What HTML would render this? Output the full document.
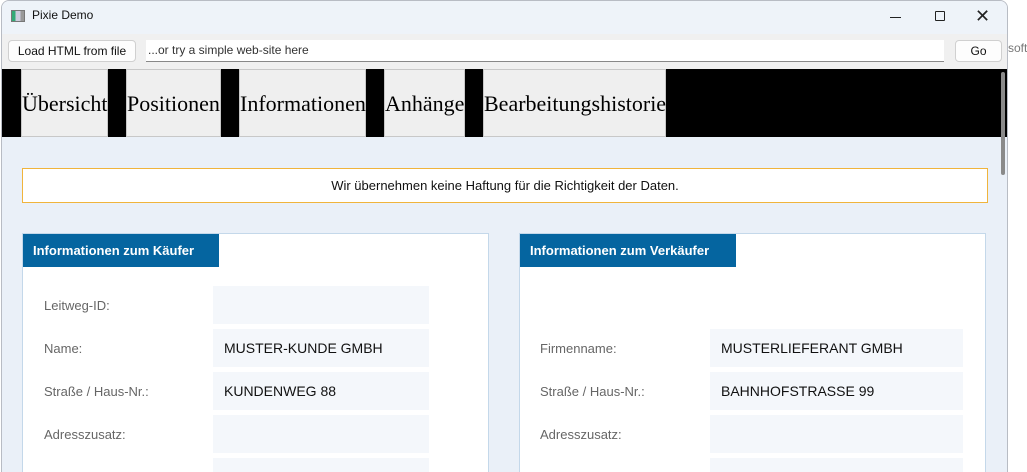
<!DOCTYPE html>
<html><head><meta charset="utf-8"><style>
*{margin:0;padding:0;box-sizing:border-box}
html,body{width:1027px;height:472px;overflow:hidden}
body{background:#fff;font-family:"Segoe UI","Liberation Sans",sans-serif;position:relative}
.a{position:absolute}
.win{left:1px;top:0;width:1007px;height:472px;border:1px solid #b8bcc4;border-bottom:none;border-radius:8px 8px 0 0;background:#eef3f9;overflow:hidden}
.tab{position:absolute;top:68px;height:68px;background:#efefef;border:1px solid #c8c8c8;font-family:"Liberation Serif",serif;font-size:22px;line-height:68px;color:#000;white-space:nowrap}
.lbl{position:absolute;font-size:13px;color:#666}
.val{position:absolute;background:#f4f7fb;height:38px;font-size:14px;color:#111;line-height:38px;padding-left:11px}
</style></head><body>
<div class="a" style="left:1008px;top:41px;font-size:12px;color:#777">soft</div>
<div class="a win">
 <div class="a" style="left:0;top:0;width:1006px;height:34px;background:#eef3f9"></div>
 <div class="a" style="left:9px;top:9px;width:14px;height:12px;border:1px solid #777;background:linear-gradient(90deg,#3a7 0 30%,#ccd 30% 70%,#999 70%)"></div>
 <div class="a" style="left:30px;top:7px;font-size:12px;color:#111">Pixie Demo</div>
 <div class="a" style="left:888px;top:16px;width:11px;height:1px;background:#222"></div>
 <div class="a" style="left:933px;top:10px;width:10px;height:10px;border:1px solid #222;border-radius:1px"></div>
 <div class="a" style="left:973px;top:6px;font-size:18px;color:#222;line-height:18px">✕</div>
 <div class="a" style="left:0;top:33px;width:1006px;height:35px;background:#f0f0f0"></div>
 <div class="a" style="left:6px;top:39px;width:128px;height:22px;background:#fdfdfd;border:1px solid #d0d0d0;border-radius:4px;font-size:12px;text-align:center;line-height:20px;color:#111">Load HTML from file</div>
 <div class="a" style="left:144px;top:39px;width:798px;height:22px;background:#fff;border-bottom:1px solid #888;font-size:12px;line-height:20px;padding-left:2px;color:#333">...or try a simple web-site here</div>
 <div class="a" style="left:953px;top:39px;width:47px;height:22px;background:#fdfdfd;border:1px solid #d0d0d0;border-radius:4px;font-size:12px;text-align:center;line-height:20px;color:#111">Go</div>
 <div class="a" style="left:0;top:68px;width:1006px;height:68px;background:#000"></div>
 <div class="tab" style="left:19px;width:87px">Übersicht</div>
 <div class="tab" style="left:124px;width:95px">Positionen</div>
 <div class="tab" style="left:237px;width:127px">Informationen</div>
 <div class="tab" style="left:382px;width:81px">Anhänge</div>
 <div class="tab" style="left:481px;width:183px">Bearbeitungshistorie</div>
 <div class="a" style="left:0;top:136px;width:1006px;height:336px;background:#eaf0f8"></div>
 <div class="a" style="left:999px;top:71px;width:4px;height:103px;background:#8a8a8a;border-radius:2px"></div>
 <div class="a" style="left:20px;top:167px;width:966px;height:35px;background:#fff;border:1px solid #f0b43c;text-align:center;font-size:13px;line-height:33px;color:#111">Wir übernehmen keine Haftung für die Richtigkeit der Daten.</div>

 <div class="a" style="left:20px;top:232px;width:467px;height:240px;background:#fff;border:1px solid #c4d8ea;border-bottom:none"></div>
 <div class="a" style="left:21px;top:233px;width:196px;height:33px;background:#0565a0;color:#fff;font-weight:bold;font-size:13px;line-height:33px;padding-left:10px">Informationen zum Käufer</div>
 <div class="lbl" style="left:42px;top:297px">Leitweg-ID:</div>
 <div class="val" style="left:211px;top:285px;width:216px"></div>
 <div class="lbl" style="left:42px;top:340px">Name:</div>
 <div class="val" style="left:211px;top:328px;width:216px">MUSTER-KUNDE GMBH</div>
 <div class="lbl" style="left:42px;top:383px">Straße / Haus-Nr.:</div>
 <div class="val" style="left:211px;top:371px;width:216px">KUNDENWEG 88</div>
 <div class="lbl" style="left:42px;top:426px">Adresszusatz:</div>
 <div class="val" style="left:211px;top:414px;width:216px"></div>
 <div class="val" style="left:211px;top:457px;width:216px;height:15px"></div>

 <div class="a" style="left:517px;top:232px;width:467px;height:240px;background:#fff;border:1px solid #c4d8ea;border-bottom:none"></div>
 <div class="a" style="left:518px;top:233px;width:216px;height:33px;background:#0565a0;color:#fff;font-weight:bold;font-size:13px;line-height:33px;padding-left:10px">Informationen zum Verkäufer</div>
 <div class="lbl" style="left:538px;top:340px">Firmenname:</div>
 <div class="val" style="left:708px;top:328px;width:253px">MUSTERLIEFERANT GMBH</div>
 <div class="lbl" style="left:538px;top:383px">Straße / Haus-Nr.:</div>
 <div class="val" style="left:708px;top:371px;width:253px">BAHNHOFSTRASSE 99</div>
 <div class="lbl" style="left:538px;top:426px">Adresszusatz:</div>
 <div class="val" style="left:708px;top:414px;width:253px"></div>
 <div class="val" style="left:708px;top:457px;width:253px;height:15px"></div>
</div>
</body></html>
